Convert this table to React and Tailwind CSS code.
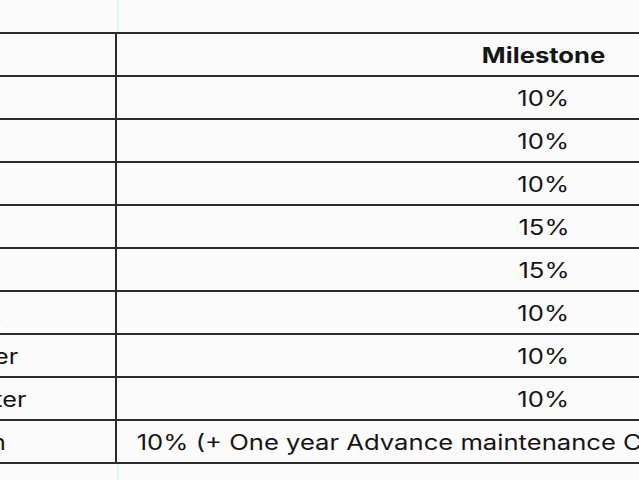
export default function App() {
  // pad = right padding of the label cell, so only the tail of each label shows
  const rows = [
    { label: 'Booking Amount', pct: '10%', pad: 'pr-[115px]' },
    { label: 'Within 30 days of Booking', pct: '10%', pad: 'pr-[140px]' },
    { label: 'On Completion of Foundation', pct: '10%', pad: 'pr-[140px]' },
    { label: 'On Completion of Ground Floor Slab', pct: '15%', pad: 'pr-[140px]' },
    { label: 'On Completion of First Floor Slab', pct: '15%', pad: 'pr-[140px]' },
    { label: 'On Completion of Brick Work', pct: '10%', pad: 'pr-[115px]' },
    { label: 'On Completion of Plaster', pct: '10%', pad: 'pr-[97px]' },
    { label: 'On Completion of Ext. Plaster', pct: '10%', pad: 'pr-[88px]' },
    { label: 'On Possession', pct: '10% (+ One year Advance maintenance Charges and Corpus Fund)', pad: 'pr-[109px]' },
  ];

  return (
    <div className="h-[480px] w-[639px] overflow-hidden bg-[#fbfbfb] text-[#161616]" style={{ fontFamily: 'Inter, "Liberation Sans", sans-serif' }}>
      <div className="ml-[117px] h-[32px] w-[2px] bg-[#e3f3f1]" />

      <div className="ml-[-300px] w-[1270px] border-t-2 border-[#2b2b2b]">
        <div className="flex h-[43px] border-b-2 border-[#2b2b2b]">
          <div className="w-[417px] border-r-2 border-[#2b2b2b]" />
          <div className="flex flex-1 items-center justify-center pt-[2px] text-[21px] font-bold">
            <span className="inline-block scale-x-[1.22]">Milestone</span>
          </div>
        </div>
        {rows.map((r) => (
          <div key={r.label} className="flex h-[43px] border-b-2 border-[#2b2b2b]">
            <div className={`flex w-[417px] items-center justify-end border-r-2 border-[#2b2b2b] pt-[2px] text-[21px] whitespace-nowrap ${r.pad}`}>
              <span className="inline-block origin-right scale-x-[1.2]">{r.label}</span>
            </div>
            <div className="flex flex-1 items-center justify-center pt-[2px] text-[21px] whitespace-nowrap">
              <span className="inline-block scale-x-[1.22]">{r.pct}</span>
            </div>
          </div>
        ))}
      </div>

      <div className="ml-[117px] h-[20px] w-[2px] bg-[#e3f3f1]" />
    </div>
  );
}
